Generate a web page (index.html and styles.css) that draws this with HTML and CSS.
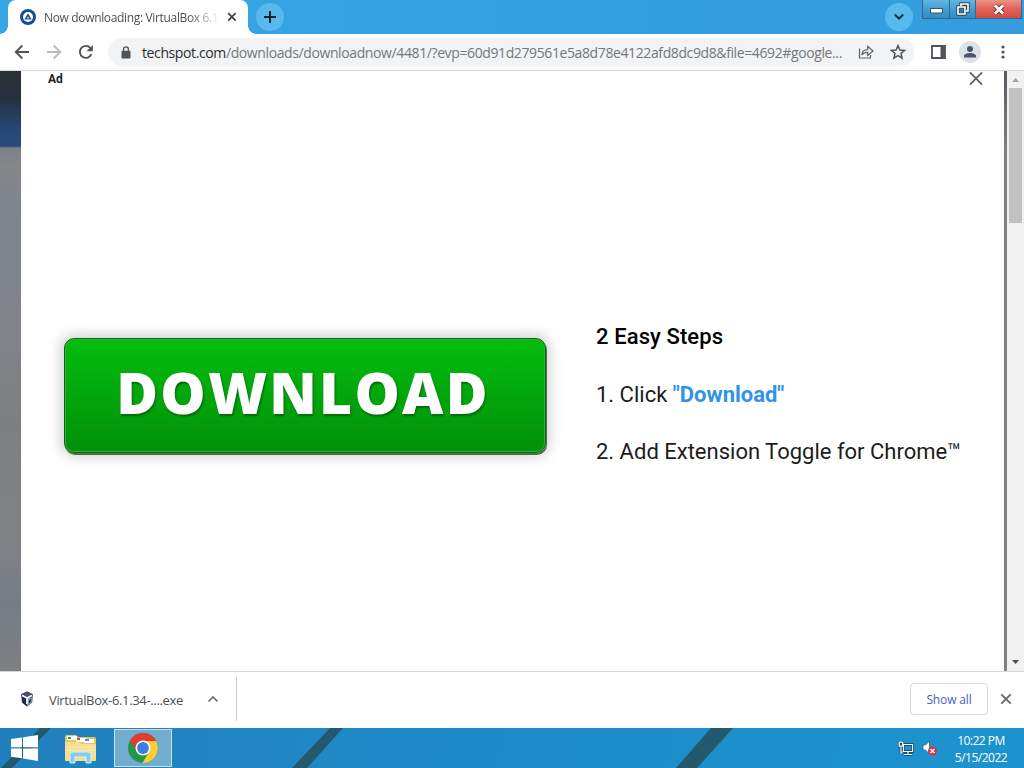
FILE: index.html
```html
<!DOCTYPE html>
<html lang="en">
<head>
    <meta charset="UTF-8">
    <meta name="viewport" content="width=device-width, initial-scale=1.0">
    <title>Now downloading: VirtualBox 6.1</title>
    <link rel="stylesheet" href="styles.css">
</head>
<body>
    <!-- Tab strip -->
    <div class="tab-strip">
        <div class="tab">
            <svg class="favicon" width="16" height="16" viewBox="0 0 16 16">
                <circle cx="8" cy="8" r="8" fill="#174b9b"/>
                <circle cx="8" cy="8" r="5" fill="#fff"/>
                <path d="M8 4.200l3.600 6.300H4.400z" fill="#174b9b"/>
                <path d="M8 7.500l1.200 2.100H6.800z" fill="#fff"/>
            </svg>
            <span class="tab-title">Now downloading: VirtualBox 6.1</span>
            <svg class="tab-close" width="10" height="10" viewBox="0 0 10 10"><path d="M1.2 1.2l7.4 7.4M8.6 1.2L1.2 8.6" stroke="#3c4043" stroke-width="1.7"/></svg>
        </div>
        <div class="round-btn new-tab">
            <svg width="14" height="14" viewBox="0 0 14 14"><path d="M7 1v12M1 7h12" stroke="#10222e" stroke-width="2"/></svg>
        </div>
        <div class="round-btn tab-search">
            <svg width="12" height="8" viewBox="0 0 12 8"><path d="M1.8 1.5L6 5.7l4.2-4.2" fill="none" stroke="#10303f" stroke-width="2"/></svg>
        </div>
        <div class="window-buttons">
            <div class="win-btn minimize"><svg width="13" height="6" viewBox="0 0 13 6"><rect x=".5" y=".5" width="12" height="4.5" fill="#fff" stroke="#3d5264"/></svg></div>
            <div class="win-btn restore">
                <svg width="14" height="14" viewBox="0 0 14 14" fill="none">
                    <path d="M5 4V2h7v7h-2M2 5h7v7H2z" stroke="#31475a" stroke-width="3.4"/>
                    <path d="M5 4V2h7v7h-2M2 5h7v7H2z" stroke="#fff" stroke-width="1.6"/>
                    <path d="M4.6 7.600h1.800v1.800H4.600z" fill="#31475a"/>
                </svg>
            </div>
            <div class="win-btn close">
                <svg width="12" height="11" viewBox="0 0 12 11"><path d="M2 1.500l8 8M10 1.500l-8 8" stroke="#6c3733" stroke-width="4.600"/><path d="M2 1.500l8 8M10 1.500l-8 8" stroke="#fff" stroke-width="2.800"/></svg>
            </div>
        </div>
    </div>

    <!-- Toolbar -->
    <div class="toolbar">
        <svg class="nav-icon" width="16" height="16" viewBox="0 0 16 16"><path d="M15 8H2M8.3 1.5L1.8 8l6.5 6.5" fill="none" stroke="#505357" stroke-width="1.9"/></svg>
        <svg class="nav-icon" width="16" height="16" viewBox="0 0 16 16"><path d="M1 8h13M7.7 1.5L14.2 8l-6.5 6.5" fill="none" stroke="#babcbe" stroke-width="1.9"/></svg>
        <svg class="nav-icon" width="16" height="16" viewBox="0 0 16 16"><path d="M13.4 10.2A6 6 0 1 1 12.3 3.8L14 5.5" fill="none" stroke="#505357" stroke-width="1.9"/><path d="M14.8 1v6.2H8.6z" fill="#505357"/></svg>
        <div class="address-bar">
            <svg class="lock" width="10" height="13" viewBox="0 0 10 13"><rect x=".5" y="4.8" width="9" height="7.7" rx="1" fill="#505357"/><path d="M2.6 5V3.3a2.4 2.4 0 0 1 4.8 0V5" fill="none" stroke="#505357" stroke-width="1.4"/></svg>
            <span class="url"><span class="host">techspot.com</span>/downloads/downloadnow/4481/?evp=60d91d279561e5a8d78e4122afd8dc9d8&amp;file=4692#google...</span>
            <svg class="share" width="16" height="16" viewBox="0 0 16 16" fill="none" stroke="#5f6368" stroke-width="1.2"><path d="M1.500 4.500v9.500h11v-3"/><path d="M3.800 11c.3-3.700 2.500-5.300 5.900-5.400V2.400L15 7l-5.300 4.400V8.300c-2.800 0-4.700.8-5.900 2.700z"/></svg>
            <svg class="star" width="16" height="16" viewBox="0 0 16 16"><path d="M8 1.600l1.900 4.400 4.700.4-3.600 3.100 1.100 4.700L8 11.700l-4.100 2.500L5 9.500 1.400 6.400l4.700-.4z" fill="none" stroke="#505357" stroke-width="1.500"/></svg>
        </div>
        <svg class="side-panel" width="15" height="14" viewBox="0 0 15 14"><path d="M1 1h13v12H1z" fill="none" stroke="#505357" stroke-width="1.800"/><path d="M9.500 1H14v12H9.500z" fill="#505357"/></svg>
        <div class="avatar">
            <svg width="14" height="14" viewBox="0 0 14 14" fill="#4a5468"><circle cx="7" cy="4" r="3"/><path d="M1 12.500v-1.400C1 9 4.500 8 7 8s6 1 6 3.100v1.400z"/></svg>
        </div>
        <svg class="menu-dots" width="4" height="14" viewBox="0 0 4 14" fill="#505357"><circle cx="2" cy="2" r="1.600"/><circle cx="2" cy="7" r="1.600"/><circle cx="2" cy="12" r="1.600"/></svg>
    </div>

    <!-- Page with the ad on top -->
    <div class="viewport">
        <div class="backdrop"></div>
        <div class="ad">
            <div class="ad-header">
                <span class="ad-label">Ad</span>
                <svg width="16" height="15" viewBox="0 0 16 16"><path d="M1.500 1.500l13 13M14.500 1.500l-13 13" stroke="#606060" stroke-width="1.900"/></svg>
            </div>
            <div class="ad-body">
                <a class="download-btn"><span>DOWNLOAD</span></a>
                <div class="steps">
                    <h2>2 Easy Steps</h2>
                    <p>1. Click <b>"Download"</b></p>
                    <p>2. Add Extension Toggle for Chrome™</p>
                </div>
            </div>
        </div>
        <div class="backdrop-right"></div>
        <div class="scrollbar">
            <svg width="7" height="4" viewBox="0 0 7 4"><path d="M0 4l3.500-4L7 4z" fill="#a3a3a3"/></svg>
            <div class="thumb"></div>
            <svg width="7" height="4" viewBox="0 0 7 4"><path d="M0 0h7L3.500 4z" fill="#505050"/></svg>
        </div>
    </div>

    <!-- Downloads bar -->
    <div class="downloads">
        <div class="download-item">
            <svg width="14" height="16" viewBox="0 0 14 16">
                <path d="M7 .5l5.800 2.700-.7 8.300L7 15.500l-5.100-4L1.200 3.200z" fill="#1d2b50"/>
                <path d="M7 .5l5.800 2.700L7 6 1.200 3.200z" fill="#43516c"/>
                <path d="M7 7v8.500l5.100-4 .4-5z" fill="#8494af"/>
                <path d="M2.200 4.600L7 7.100l4.800-2.500M7 7v6" fill="none" stroke="#fff" stroke-width="1.700"/>
                <path d="M9 9.500l2-1.500v2.500l-2 1.800z" fill="#1d2b50"/>
            </svg>
            <span class="file-name">VirtualBox-6.1.34-....exe</span>
            <svg width="12" height="8" viewBox="0 0 12 8"><path d="M1.500 6.500L6 2l4.500 4.500" fill="none" stroke="#6a6d70" stroke-width="1.700"/></svg>
        </div>
        <button class="show-all">Show all</button>
        <svg class="close-bar" width="12" height="12" viewBox="0 0 12 12"><path d="M1.300 1.300l9.400 9.400M10.700 1.300l-9.400 9.400" stroke="#66696c" stroke-width="1.900"/></svg>
    </div>

    <!-- Taskbar -->
    <div class="taskbar">
        <svg class="wallpaper" width="1024" height="40" viewBox="0 0 1024 40"><path d="M40 0h11L12 40H1zM330 0h13l-36 40h-15zM711 0h22l-36 40h-21z" fill="#23586d"/></svg>
        <svg class="start" width="27" height="26" viewBox="0 0 27 26" fill="#fff"><path d="M0 4l11-1.600V12.300H0zM12 2.200L27 0v12.300H12zM0 13.400h11v9.900L0 21.700zM12 13.400h15V26l-15-2.500z"/></svg>
        <svg class="explorer" width="33" height="30" viewBox="0 0 33 30">
            <path d="M1 3q0-2 2-2h9l2 2h16q2 0 2 2v21H1z" fill="#e4c565"/>
            <path d="M3 2h10v4H3zM12 4h10v4H12zM20 5h10v4H20z" fill="#fff"/>
            <path d="M4 3h3v2H4z" fill="#3c9c4b"/><path d="M13 4h3v2h-3z" fill="#d34b37"/><path d="M21 5h4v2h-4z" fill="#4c94ce"/>
            <path d="M1 8h14l3 2h14v16q0 1-1 1H2q-1 0-1-1z" fill="#f5e08f"/>
            <path d="M2 13h29M2 16h29" stroke="#fbedb1" stroke-width="1"/>
            <path d="M6 29V20q0-2 2-2h17q2 0 2 2v9h-5v-6H11v6z" fill="#8ccbe9" stroke="#d6f1fb"/>
        </svg>
        <div class="task-btn">
            <svg width="30" height="30" viewBox="0 0 30 30">
                <circle cx="15" cy="15" r="15" fill="#249847"/>
                <path d="M15 8h13.200A15 15 0 0 1 14.500 30l7-12z" fill="#fccc36"/>
                <path d="M2 7.500A15 15 0 0 1 28.200 8H15a7 7 0 0 0-6.500 9.500z" fill="#e33b2e"/>
                <circle cx="15" cy="15" r="7.500" fill="#fff"/>
                <circle cx="15" cy="15" r="5.900" fill="#3c7ce4"/>
            </svg>
        </div>
        <div class="tray">
            <svg width="16" height="15" viewBox="0 0 16 15" fill="none">
                <path d="M5.500 3.500h9v7h-9zM10 10.500v3M6 13.500h8M3 6v7M1.200 1.200h3.600v4H1.200zM3 11h2" stroke="#153e58" stroke-width="2.600"/>
                <path d="M5.500 3.500h9v7h-9zM10 10.500v3M6 13.500h8M3 6v7M1.200 1.200h3.600v4H1.200zM3 11h2" stroke="#fff" stroke-width="1.200"/>
            </svg>
            <svg width="16" height="16" viewBox="0 0 16 16">
                <path d="M1 5h2.500L7.500 1v13l-4-4H1z" fill="#fff" stroke="#24556e" stroke-width=".7"/>
                <circle cx="10.500" cy="11" r="4.500" fill="#d6333c"/>
                <path d="M8.500 9l4 4M12.500 9l-4 4" stroke="#fff" stroke-width="1.500"/>
            </svg>
            <div class="clock">
                <div class="time">10:22 PM</div>
                <div class="date">5/15/2022</div>
            </div>
        </div>
    </div>
</body>
</html>
```
FILE: styles.css
```css
* {
    margin: 0;
    padding: 0;
    box-sizing: border-box;
}

body {
    width: 1024px;
    height: 768px;
    overflow: hidden;
    display: flex;
    flex-direction: column;
    background-color: #fff;
    color: #4c4f53;
    font-family: "Open Sans", "Noto Sans", sans-serif;
}

svg {
    display: block;
    flex-shrink: 0;
}

/* Tab strip */
.tab-strip {
    display: flex;
    height: 34px;
    padding: 0 2px 0 8px;
    background: linear-gradient(90deg, #38a5e6, #329fe1 65%, #359ddd);
}

.tab {
    position: relative;
    display: flex;
    align-items: center;
    width: 240px;
    padding: 0 11px 0 12px;
    background-color: #fff;
    border-radius: 8px 8px 0 0;
}

.tab::before,
.tab::after {
    content: "";
    position: absolute;
    bottom: 0;
    width: 8px;
    height: 8px;
}

.tab::before {
    left: -8px;
    background: radial-gradient(circle at 0 0, transparent 7.5px, #fff 8px);
}

.tab::after {
    right: -8px;
    background: radial-gradient(circle at 100% 0, transparent 7.5px, #fff 8px);
}

.tab-title {
    width: 181px;
    margin: 0 2px 0 8px;
    white-space: nowrap;
    font-size: 12px;
    letter-spacing: -0.34px;
    -webkit-mask-image: linear-gradient(90deg, #000 145px, transparent 176px);
    mask-image: linear-gradient(90deg, #000 145px, transparent 176px);
}

.round-btn {
    display: flex;
    align-items: center;
    justify-content: center;
    width: 28px;
    height: 28px;
    margin-top: 3px;
    border-radius: 50%;
    background-color: #58b9ec;
}

.new-tab {
    margin-left: 8px;
}

.tab-search {
    margin-left: auto;
    margin-right: 9px;
}

.window-buttons {
    display: flex;
    height: 19px;
    border: 1px solid #37668a;
    border-top: none;
}

.win-btn {
    display: flex;
    align-items: center;
    justify-content: center;
    width: 27px;
    border-right: 1px solid #37668a;
    background: linear-gradient(#65b5e1, #439ed5 50%, #348ec6);
}

.minimize {
    padding-top: 4px;
}

.restore {
    width: 26px;
}

.close {
    width: 45px;
    border-right: none;
    background: linear-gradient(#e99487, #e2665c 45%, #d34b42);
}

/* Toolbar */
.toolbar {
    display: flex;
    align-items: center;
    height: 37px;
    padding-left: 14px;
    border-bottom: 1px solid #d5d7da;
}

.nav-icon {
    margin-right: 16px;
}

.address-bar {
    display: flex;
    align-items: center;
    width: 806px;
    height: 28px;
    margin-left: -2px;
    padding-left: 13px;
    border-radius: 14px;
    background-color: #f1f3f4;
}

.url {
    width: 706px;
    margin-left: 11px;
    white-space: nowrap;
    font-size: 14px;
    letter-spacing: -0.39px;
    color: #74787c;
}

.host {
    color: #2c2d30;
}

.share {
    margin-left: 10px;
}

.star {
    margin-left: 16px;
}

.side-panel {
    margin-left: 17px;
}

.avatar {
    display: flex;
    align-items: center;
    justify-content: center;
    width: 22px;
    height: 22px;
    margin-left: 13px;
    border-radius: 50%;
    background-color: #dde1e8;
}

.menu-dots {
    margin-left: 20px;
}

/* Page */
.viewport {
    display: flex;
    height: 600px;
}

.backdrop {
    width: 21px;
    background: linear-gradient(#2a3036 0, #27313f 28px, #264978 60px, #29497a 75px, #7b8189 77px, #848688 95px, #7e858d 140px, #808388 260px, #7e7f82 350px, #808286 480px, #757c84 530px, #7e8082 600px);
}

.ad {
    display: flex;
    flex-direction: column;
    width: 983px;
    background-color: #fff;
    font-family: Roboto, sans-serif;
}

.ad-header {
    display: flex;
    justify-content: space-between;
    height: 16px;
    padding: 0 20px 0 27px;
}

.ad-label {
    font-size: 12px;
    font-weight: 700;
    line-height: 16px;
    color: #222;
}

.ad-body {
    display: flex;
    padding: 251px 0 0 43px;
}

.download-btn {
    display: flex;
    align-items: center;
    justify-content: center;
    width: 482px;
    height: 115px;
    padding: 0 4px 6px 0;
    border: 1px solid #08660e;
    border-radius: 10px;
    background: linear-gradient(#03bd0e, #01900a);
    box-shadow: inset 0 0 0 1px #35b03c, 1px 2px 0 #467548, 0 0 14px 3px rgba(0, 0, 0, 0.2);
}

.download-btn span {
    font-family: "Open Sans", sans-serif;
    font-size: 57px;
    font-weight: 800;
    line-height: 1;
    letter-spacing: 2.2px;
    color: #fff;
    text-shadow: 1px 2px 2px #08660e;
}

.steps {
    margin: -14px 0 0 50px;
    white-space: nowrap;
    font-size: 22px;
    line-height: 26px;
    color: #1c1c1c;
}

.steps h2 {
    font-size: 22px;
    font-weight: 500;
    letter-spacing: 0.1px;
    color: #000;
}

.steps p {
    margin-top: 31.5px;
}

.steps b {
    font-weight: 700;
    color: #2f94e5;
}

.backdrop-right {
    width: 3px;
    background: linear-gradient(#555b60, #7d8285 80px);
}

.scrollbar {
    display: flex;
    flex-direction: column;
    align-items: center;
    width: 17px;
    padding: 7px 0 7px;
    background-color: #f1f1f1;
}

.thumb {
    width: 13px;
    height: 135px;
    margin-top: 6px;
    margin-bottom: auto;
    background-color: #c1c1c1;
}

/* Downloads bar */
.downloads {
    display: flex;
    align-items: center;
    height: 57px;
    padding-bottom: 2px;
    border-top: 1px solid #d5d7da;
}

.download-item {
    display: flex;
    align-items: center;
    width: 237px;
    height: 44px;
    padding-left: 20px;
    border-right: 1px solid #c9cbce;
}

.file-name {
    width: 142px;
    margin: 2px 0 0 15px;
    white-space: nowrap;
    font-size: 13px;
    letter-spacing: -0.34px;
}

.download-item svg:last-child {
    margin-left: 16px;
}

.show-all {
    width: 78px;
    height: 32px;
    margin-left: auto;
    border: 1px solid #d5d8dc;
    border-radius: 4px;
    background-color: #fff;
    font: 500 12px "Open Sans", sans-serif;
    letter-spacing: -0.15px;
    color: #3f66be;
}

.close-bar {
    margin: 0 12px;
}

/* Taskbar */
.taskbar {
    position: relative;
    display: flex;
    height: 40px;
    padding-left: 11px;
    background: linear-gradient(100deg, #227fbd, #1d8bc8 45%, #1d93ce);
}

.wallpaper {
    position: absolute;
    top: 0;
    left: 0;
}

.start,
.explorer,
.task-btn,
.tray {
    position: relative;
}

.start {
    margin-top: 7px;
}

.explorer {
    margin: 6px 0 0 26px;
}

.task-btn {
    display: flex;
    align-items: center;
    justify-content: center;
    width: 58px;
    height: 38px;
    margin: 1px 0 0 17px;
    border: 1px solid #c9e0ee;
    background-color: #72add1;
}

.tray {
    display: flex;
    align-items: center;
    margin-left: auto;
    padding-right: 16px;
}

.tray svg + svg {
    margin-left: 8px;
}

.clock {
    width: 54px;
    margin: 2px 0 0 16px;
    font-size: 12px;
    line-height: 17px;
    letter-spacing: -0.5px;
    text-align: center;
    white-space: nowrap;
    color: #fff;
}
```
